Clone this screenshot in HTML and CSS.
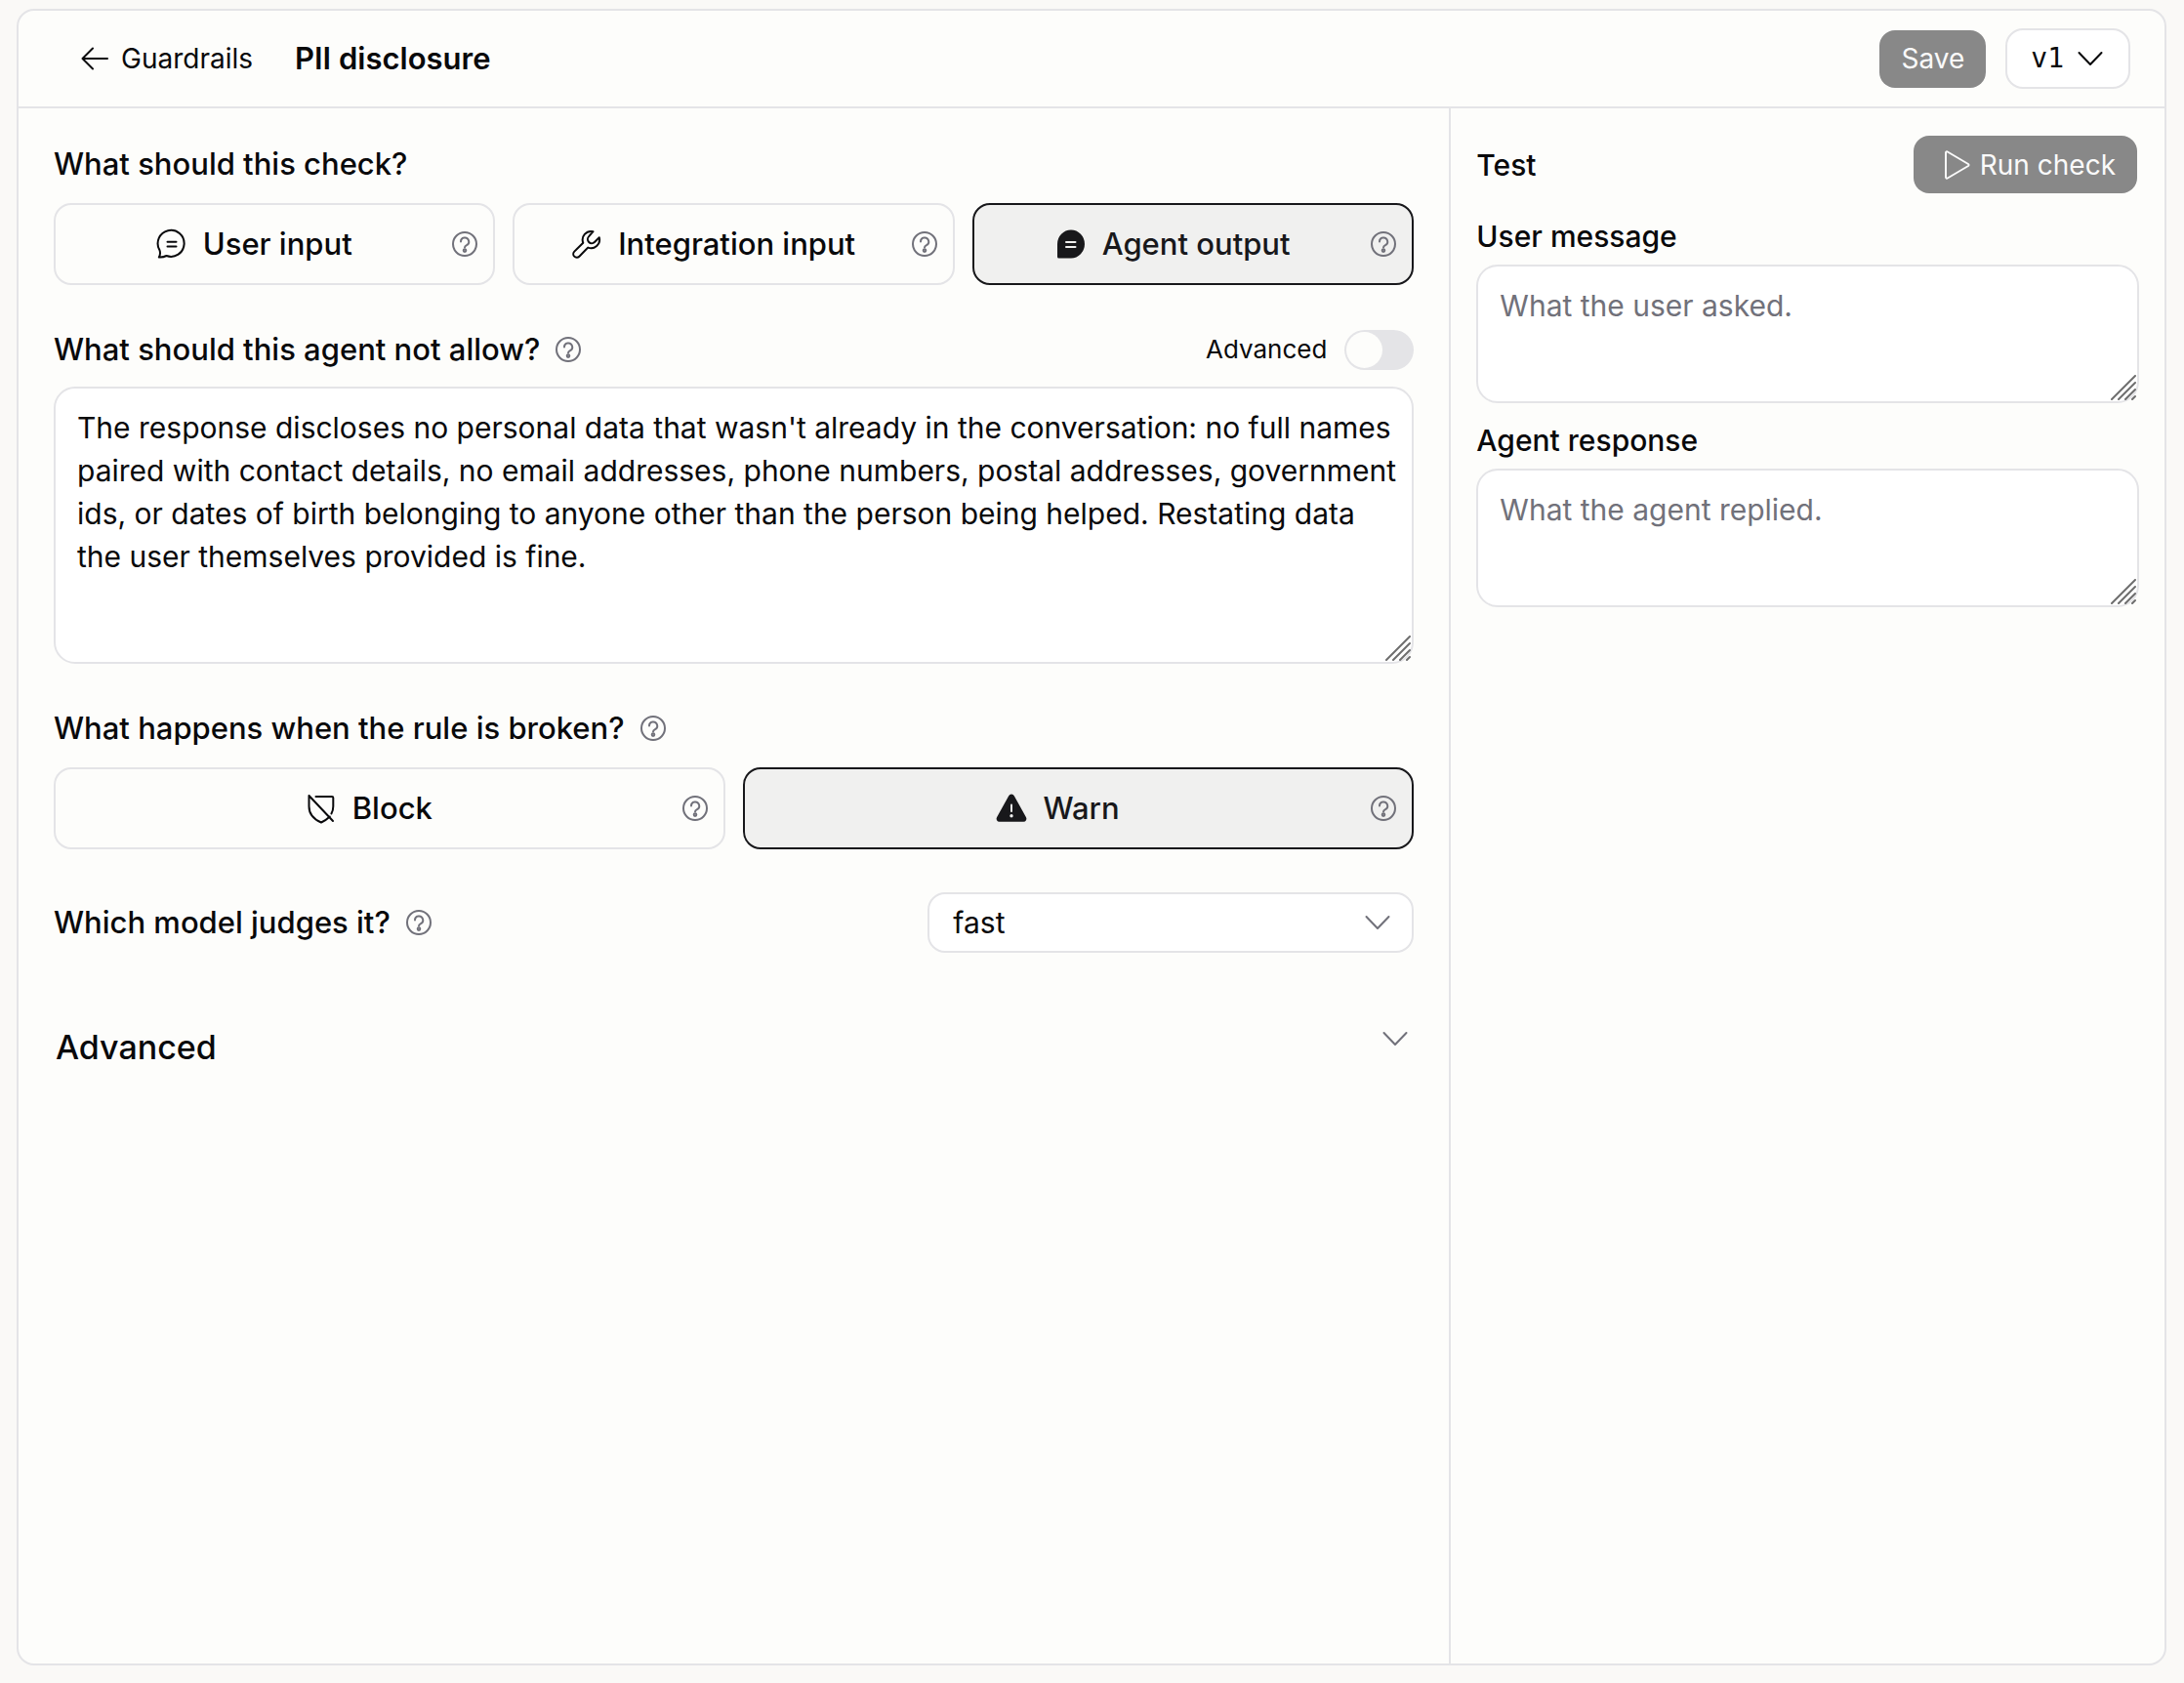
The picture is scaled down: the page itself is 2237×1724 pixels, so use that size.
FILE: index.html
```html
<!DOCTYPE html>
<html lang="en">
<head>
  <meta charset="UTF-8">
  <meta name="viewport" content="width=device-width, initial-scale=1.0">
  <title>PII disclosure - Guardrails</title>
  <link rel="stylesheet" href="styles.css">
</head>
<body>
  <!-- shared icons -->
  <svg class="sprite" aria-hidden="true">
    <symbol id="i-help" viewBox="0 0 26 26">
      <circle cx="13" cy="13" r="12"/>
      <path d="M9 10.6a4.1 4.1 0 1 1 6 3.6c-1.3.7-2 1.1-2 2.3"/>
      <circle class="dot" cx="13" cy="19.6" r="1.3"/>
    </symbol>
    <symbol id="i-chevron" viewBox="0 0 26 26">
      <path d="M1.5 7 13 19 24.5 7"/>
    </symbol>
    <symbol id="i-grip" viewBox="0 0 26 26">
      <path d="M1 25 25 1M8 25 25 8M15 25 25 15M22 25l3-3"/>
    </symbol>
  </svg>

  <div class="panel">
    <header class="topbar">
      <a class="back" href="#">
        <svg class="icon-back" viewBox="0 0 28 28"><path d="M27 14H1.5M12 3.5 1.5 14 12 24.5"/></svg>
        Guardrails
      </a>
      <h1>PII disclosure</h1>
      <div class="actions">
        <button class="btn" type="button">Save</button>
        <button class="version" type="button">v1 <svg class="chevron"><use href="#i-chevron"/></svg></button>
      </div>
    </header>

    <div class="columns">
      <main class="editor">
        <section class="field">
          <h2>What should this check?</h2>
          <div class="choices">
            <div class="choice">
              <input type="radio" name="target" id="target-user">
              <label for="target-user">
                <svg class="icon" viewBox="0 0 32 32"><path d="M2.8 29.5C4.3 27 4.3 24.5 3.4 22A13.5 13.5 0 1 1 10.500 28C8.500 29 5.500 29.800 2.800 29.500ZM11.500 13.700H20.500M11.500 18.500H20.500"/></svg>
                User input
              </label>
              <button class="help" type="button" aria-label="About user input"><svg><use href="#i-help"/></svg></button>
            </div>
            <div class="choice">
              <input type="radio" name="target" id="target-integration">
              <label for="target-integration">
                <svg class="icon" viewBox="0 0 32 32"><path d="M22.5 3.2A8.7 8.7 0 0 0 12.3 14.8L3.3 23.6A3.5 3.5 0 0 0 8.3 28.7L17.200 19.600A8.700 8.700 0 0 0 28.800 9.300L24 14A3.600 3.600 0 0 1 18.200 8.100Z"/></svg>
                Integration input
              </label>
              <button class="help" type="button" aria-label="About integration input"><svg><use href="#i-help"/></svg></button>
            </div>
            <div class="choice">
              <input type="radio" name="target" id="target-agent" checked>
              <label for="target-agent">
                <svg class="icon" viewBox="0 0 32 32"><path class="solid" d="M16 1.5A14 14.5 0 0 1 16 30.5H3.5A1.5 1.5 0 0 1 2 29V16A14 14.500 0 0 1 16 1.500Z"/><path class="cut" d="M11 14H20.500M11 19H20.500"/></svg>
                Agent output
              </label>
              <button class="help" type="button" aria-label="About agent output"><svg><use href="#i-help"/></svg></button>
            </div>
          </div>
        </section>

        <section class="field compact">
          <div class="row">
            <label class="question" for="rule">What should this agent not allow?</label>
            <button class="help" type="button" aria-label="About the rule"><svg><use href="#i-help"/></svg></button>
            <label class="switch">Advanced <input type="checkbox" role="switch"></label>
          </div>
          <div class="textbox">
            <textarea id="rule" class="tall" spellcheck="false">The response discloses no personal data that wasn't already in the conversation: no full names paired with contact details, no email addresses, phone numbers, postal addresses, government ids, or dates of birth belonging to anyone other than the person being helped. Restating data the user themselves provided is fine.</textarea>
            <svg class="grip"><use href="#i-grip"/></svg>
          </div>
        </section>

        <section class="field">
          <div class="row">
            <h2>What happens when the rule is broken?</h2>
            <button class="help" type="button" aria-label="About the action"><svg><use href="#i-help"/></svg></button>
          </div>
          <div class="choices">
            <div class="choice">
              <input type="radio" name="action" id="action-block">
              <label for="action-block">
                <svg class="icon" viewBox="0 0 32 32"><path d="M3.5 3 28 29M3.5 3V14C3.5 22 9 27.5 16 30.5 19.5 29 22.5 26.7 24.800 24.500M10.5 4H27A1.300 1.300 0 0 1 28.300 5.300V14C28.300 17 27.600 19.400 26.400 21.500"/></svg>
                Block
              </label>
              <button class="help" type="button" aria-label="About block"><svg><use href="#i-help"/></svg></button>
            </div>
            <div class="choice">
              <input type="radio" name="action" id="action-warn" checked>
              <label for="action-warn">
                <svg class="icon" viewBox="0 0 32 32"><path class="solid" d="M13.2 3.2A3.2 3.2 0 0 1 18.8 3.2L31 25.2A3 3 0 0 1 28.400 29.700H3.600A3 3 0 0 1 1 25.200Z"/><path class="cut" d="M16 12.500V19"/><circle class="cut-dot" cx="16" cy="23.800" r="1.700"/></svg>
                Warn
              </label>
              <button class="help" type="button" aria-label="About warn"><svg><use href="#i-help"/></svg></button>
            </div>
          </div>
        </section>

        <section class="row">
          <label class="question" for="model">Which model judges it?</label>
          <button class="help" type="button" aria-label="About the model"><svg><use href="#i-help"/></svg></button>
          <div class="select">
            <select id="model"><option>fast</option></select>
            <svg class="chevron"><use href="#i-chevron"/></svg>
          </div>
        </section>

        <button class="more" type="button" aria-expanded="false">
          Advanced <svg class="chevron"><use href="#i-chevron"/></svg>
        </button>
      </main>

      <aside class="tester">
        <div class="tester-head">
          <h2>Test</h2>
          <button class="btn btn-run" type="button">
            <svg class="icon" viewBox="0 0 32 32"><path d="M5 3.5V28.5A1.2 1.2 0 0 0 6.8 29.5L28 17A1.2 1.2 0 0 0 28 15L6.800 2.500A1.200 1.200 0 0 0 5 3.500Z"/></svg>
            Run check
          </button>
        </div>
        <div class="test-field">
          <label class="question" for="message">User message</label>
          <div class="textbox">
            <textarea id="message" placeholder="What the user asked."></textarea>
            <svg class="grip"><use href="#i-grip"/></svg>
          </div>
        </div>
        <div class="test-field">
          <label class="question" for="response">Agent response</label>
          <div class="textbox">
            <textarea id="response" placeholder="What the agent replied."></textarea>
            <svg class="grip"><use href="#i-grip"/></svg>
          </div>
        </div>
      </aside>
    </div>
  </div>
</body>
</html>
```
FILE: styles.css
```css
* {
  box-sizing: border-box;
}
body {
  margin: 0;
  min-height: 100vh;
  padding: 9px 18px 18px 17px;
  display: flex;
  background: #faf9f7;
  font-family: Inter, "Liberation Sans", sans-serif;
  font-size: 30px;
  line-height: 44px;
  color: #09090b;
}
h1, h2 {
  margin: 0;
  font-size: 30px;
}
h1 {
  font-size: 31px;
  font-weight: 600;
}
h2, .question {
  font-weight: 500;
}
button, input, select, textarea {
  font: inherit;
  color: inherit;
}
button {
  padding: 0;
  border: none;
  background: none;
  cursor: pointer;
}
svg {
  display: block;
  flex: none;
  fill: none;
  stroke: currentColor;
  stroke-width: 2;
  stroke-linecap: round;
  stroke-linejoin: round;
}
.sprite {
  position: absolute;
  width: 0;
  height: 0;
}
.panel {
  flex: 1;
  min-width: 0;
  display: flex;
  flex-direction: column;
  background: #fdfdfb;
  border: 2px solid #e4e4e7;
  border-radius: 18px;
}

/* top bar */
.topbar {
  display: flex;
  align-items: center;
  height: 100px;
  padding: 0 35px 0 64px;
  border-bottom: 2px solid #e4e4e7;
}
.back {
  display: flex;
  align-items: center;
  gap: 13px;
  margin-right: 43px;
  font-size: 28px;
  color: inherit;
  text-decoration: none;
}
.icon-back {
  width: 28px;
  height: 28px;
}
.actions {
  display: flex;
  align-items: center;
  gap: 20px;
  margin-left: auto;
}
.btn {
  display: flex;
  align-items: center;
  gap: 8px;
  height: 59px;
  padding: 0 22px;
  border-radius: 16px;
  background: #888;
  color: #fafafa;
  font-size: 28px;
}
.btn-run {
  padding-left: 28px;
}
.version {
  display: flex;
  align-items: center;
  gap: 14px;
  height: 62px;
  padding: 0 26px 0 24px;
  border: 2px solid #e4e4e7;
  border-radius: 18px;
  background: #fff;
  font-family: "DejaVu Sans Mono", monospace;
  font-size: 28px;
}
.chevron {
  width: 26px;
  height: 26px;
}

/* editor */
.columns {
  flex: 1;
  display: grid;
  grid-template-columns: 2fr 1fr;
}
.editor {
  display: flex;
  flex-direction: column;
  gap: 44px;
  padding: 35px 36px;
}
.editor h2, .editor .question {
  font-size: 31px;
}
.field {
  display: flex;
  flex-direction: column;
  gap: 18px;
}
.field.compact {
  gap: 16px;
}
.row {
  display: flex;
  align-items: center;
  gap: 16px;
}
.help {
  color: #71717a;
}
.help svg {
  width: 26px;
  height: 26px;
}
.help .dot {
  fill: currentColor;
  stroke: none;
}
.choices {
  display: grid;
  grid-auto-flow: column;
  grid-auto-columns: 1fr;
  gap: 18px;
}
.choice {
  position: relative;
  display: flex;
  align-items: center;
  height: 84px;
  padding-right: 16px;
  border: 2px solid #e4e4e7;
  border-radius: 18px;
  font-size: 31px;
  font-weight: 500;
}
.choice input {
  position: absolute;
  opacity: 0;
}
.choice label {
  flex: 1;
  display: flex;
  align-items: center;
  justify-content: center;
  gap: 16px;
  height: 100%;
  cursor: pointer;
}
.choice:has(input:checked) {
  border-color: #18181b;
  background: #f0f0ef;
  color: #18181b;
}
.icon {
  width: 32px;
  height: 32px;
}
.solid {
  fill: currentColor;
  stroke: none;
}
.cut {
  stroke: #f0f0ef;
}
.cut-dot {
  fill: #f0f0ef;
  stroke: none;
}
.switch {
  display: flex;
  align-items: center;
  gap: 18px;
  margin-left: auto;
  font-size: 26px;
}
.switch input {
  appearance: none;
  width: 71px;
  height: 41px;
  margin: 0;
  padding: 2px;
  border-radius: 21px;
  background: #e4e4e7;
}
.switch input::before {
  content: "";
  display: block;
  width: 37px;
  height: 37px;
  border-radius: 50%;
  background: #fdfdfb;
}
.switch input:checked::before {
  margin-left: auto;
}
.textbox {
  position: relative;
}
textarea {
  display: block;
  width: 100%;
  height: 142px;
  padding: 18px 12px 18px 22px;
  border: 2px solid #e4e4e7;
  border-radius: 22px;
  background: #fff;
  resize: none;
}
textarea.tall {
  height: 284px;
}
textarea::placeholder {
  color: #71717a;
}
.grip {
  position: absolute;
  right: 3px;
  bottom: 3px;
  width: 26px;
  height: 26px;
  color: #6e6e6e;
  pointer-events: none;
}
.select {
  position: relative;
  width: 36%;
  max-width: 498px;
  margin-left: auto;
}
.select select {
  appearance: none;
  display: block;
  width: 100%;
  height: 62px;
  padding: 0 24px;
  border: 2px solid #e4e4e7;
  border-radius: 18px;
  background: #fff;
}
.select .chevron {
  position: absolute;
  top: 18px;
  right: 24px;
  color: #71717a;
  pointer-events: none;
}
.more {
  display: flex;
  justify-content: space-between;
  margin-top: 31px;
  padding: 0 6px 0 2px;
  font-size: 34px;
  font-weight: 500;
}
.more .chevron {
  color: #71717a;
}

/* test pane */
.tester {
  padding: 28px 26px;
  border-left: 2px solid #e4e4e7;
}
.tester-head {
  display: flex;
  align-items: center;
  justify-content: space-between;
  margin-bottom: 22px;
  padding-right: 2px;
}
.test-field {
  display: flex;
  flex-direction: column;
  gap: 7px;
  margin-bottom: 16px;
}
```
